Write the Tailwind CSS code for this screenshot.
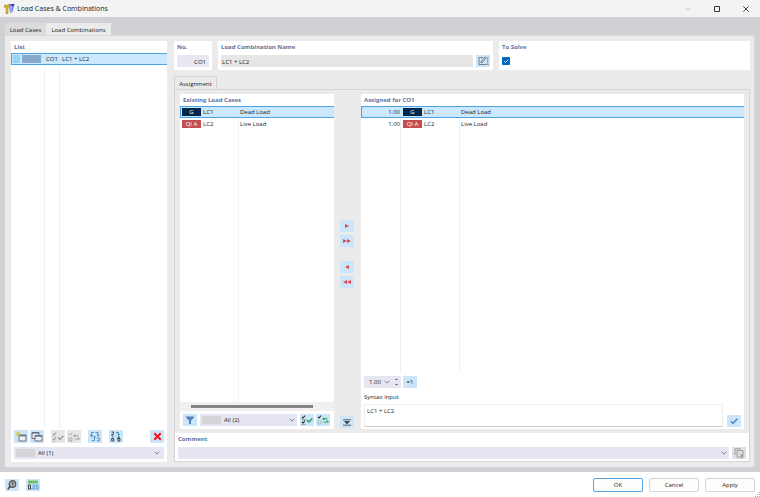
<!DOCTYPE html>
<html lang="en">
<head>
<meta charset="utf-8">
<title>Load Cases &amp; Combinations</title>
<script src="https://cdn.jsdelivr.net/npm/@tailwindcss/browser@4"></script>
</head>
<body class="flex h-screen flex-col overflow-hidden bg-white font-['Open_Sans','Noto_Sans',sans-serif] text-[6px] leading-[8px] text-[#222]">

<svg class="hidden">
  <symbol id="chev" viewBox="0 0 6 4"><path d="M.6.7 3 3.1 5.4.7" fill="none" stroke="#777" stroke-width=".9"/></symbol>
  <symbol id="checks" viewBox="0 0 12 10"><path d="M1 1.800 2 3 4 .7M1 6.800 2 8 4 5.700" fill="none" stroke="currentColor" stroke-width="1.100"/><path d="M.5 4.500h4M.5 9.300h4" stroke="currentColor" stroke-width=".4"/></symbol>
</svg>

<header class="flex h-[17px] shrink-0 items-center bg-[#f3f3f3] pl-1">
  <svg class="h-[11px] w-[11px]" viewBox="0 0 11 11"><path d="M4.500 1h6L8.500 9H6z" fill="#6f78e0"/><path d="M7.500 1h3L8 6z" fill="#3338a8"/><path d="M5 3h4L7.500 10H6z" fill="#9aa5ee"/><path d="M0 2h5.500v2.300H4V11H2V4.300H0z" fill="#e0b528" stroke="#8b7224" stroke-width=".4"/></svg>
  <h1 class="ml-[2px] text-[7px]">Load Cases &amp; Combinations</h1>
  <div class="ml-auto flex">
    <button aria-label="Minimize" class="grid h-4 w-[29px] place-items-center"><svg class="h-2 w-2" viewBox="0 0 8 8"><path d="M1 4h6" stroke="#ccc"/></svg></button>
    <button aria-label="Maximize" class="grid h-4 w-[29px] place-items-center"><svg class="h-2 w-2" viewBox="0 0 8 8"><path d="M1.500 1.500h5v5h-5z" fill="none" stroke="#333"/></svg></button>
    <button aria-label="Close" class="grid h-4 w-[29px] place-items-center"><svg class="h-2 w-2" viewBox="0 0 8 8"><path d="m1.300 1.300 5.400 5.400M6.700 1.300 1.300 6.700" stroke="#333" stroke-width=".9"/></svg></button>
  </div>
</header>

<main class="flex min-h-0 flex-1 flex-col bg-[#d0d0d5] px-[5px] pt-[6px] pb-[5px]">
  <nav class="flex h-3 shrink-0" role="tablist">
    <button role="tab" aria-selected="false" class="w-[41px] bg-[#dcdcdd] pt-[2px] text-center">Load Cases</button>
    <button role="tab" aria-selected="true" class="w-[65px] bg-[#ebebeb] pt-[2px] text-center">Load Combinations</button>
  </nav>

  <div class="flex min-h-0 flex-1 gap-[7px] border-t border-r border-[#dadada] bg-[#ebebeb] py-[5px] pr-[4px] pl-[6px]">
    <section class="flex w-[156px] shrink-0 flex-col bg-white">
      <h2 class="h-3 pt-[2px] pl-[3px] font-bold text-[#6472a0]">List</h2>
      <div class="min-h-0 flex-1">
        <table class="h-full w-full table-fixed border-separate border-spacing-0">
          <colgroup><col class="w-[34px]"><col class="w-[15px]"><col></colgroup>
          <tr class="h-3">
            <td class="h-3 border-y border-l border-[#4ba3e3] bg-[#cce8ff] p-0"><span class="flex gap-[2px] pl-[1px]"><i class="h-2 w-[7px] bg-[#8ed8f6]"></i><i class="h-2 w-[19px] bg-[#87a9c9]"></i></span></td>
            <td class="border-y border-[#4ba3e3] bg-[#cce8ff] p-0 pl-[1px]">CO1</td>
            <td class="border-y border-[#4ba3e3] bg-[#cce8ff] p-0 pl-[2px]">LC1 + LC2</td>
          </tr>
          <tr><td class="border-r border-[#f1f1f1]"></td><td class="border-r border-[#f1f1f1]"></td><td></td></tr>
        </table>
      </div>
      <div class="flex shrink-0 px-[3px] pt-[2px]">
        <button aria-label="New combination" class="grid h-[13px] w-[14px] place-items-center bg-[#cce5f8]"><svg class="h-[11px] w-3" viewBox="0 0 12 11"><path d="M4 4h7v6H4z" fill="#eee" stroke="#555" stroke-width=".8"/><path d="M4 4.700h7" stroke="#536d9a" stroke-width="1.200"/><path d="M3 0v5.500M.3 2.700h5.400M1 .8l4 4M5 .8l-4 4" stroke="#d9c81c" stroke-width=".7"/></svg></button>
        <button aria-label="Copy combination" class="ml-[2px] grid h-[13px] w-[14px] place-items-center bg-[#cce5f8]"><svg class="h-[11px] w-3" viewBox="0 0 12 11"><path d="M1 1.500h7v6H1z" fill="#eee" stroke="#555" stroke-width=".8"/><path d="M1 2h7" stroke="#536d9a" stroke-width="1.200"/><path d="M4 4.500h7v5.500H4z" fill="#eee" stroke="#555" stroke-width=".8"/><path d="M4 5h7" stroke="#536d9a" stroke-width="1.200"/></svg></button>
        <button aria-label="Select all" disabled class="ml-[7px] grid h-[13px] w-[14px] place-items-center bg-[#e6e6e6] text-[#999]"><svg class="h-[10px] w-3" viewBox="0 0 12 10"><use href="#checks"/><path d="m6 5.500 1.800 2L11.300 4" fill="none" stroke="#999" stroke-width="1.300"/></svg></button>
        <button aria-label="Invert selection" disabled class="ml-[2px] grid h-[13px] w-[14px] place-items-center bg-[#e6e6e6] text-[#999]"><svg class="h-[10px] w-3" viewBox="0 0 12 10"><path d="M1 1.800 2 3 4 .7M1 6h3v3H1zM6 4Q8 2.500 10.500 4M6.500 7Q9 8.500 11 6M6 2.500v2h2M11 8V6H9" fill="none" stroke="#999" stroke-width=".8"/></svg></button>
        <button aria-label="Renumber" class="ml-[7px] grid h-[13px] w-[14px] place-items-center bg-[#cce5f8]"><svg class="h-[11px] w-3" viewBox="0 0 12 11"><path d="M5 1.500H2.500v4M1 4l1.500 1.700L4 4M3 9.500h2.500V5.500M4.200 6.500l1.300-1.500 1.300 1.500M6.500 1.500H9v3.500M7.700 3.700 9 5l1.300-1.300M8 7h2.300v2.800H8" fill="none" stroke="#4289b5" stroke-width=".9"/></svg></button>
        <button aria-label="Sort by number" class="ml-[7px] grid h-[13px] w-[14px] place-items-center bg-[#cce5f8]"><svg class="h-[11px] w-3" viewBox="0 0 12 11"><path d="M1.500 1h2v1.500L1.500 4h2.200M1.700 7.500h2v2.500h-2zM8 7.500h2v2.500H8zM10 6H8v2" fill="none" stroke="#333" stroke-width=".9"/><path d="M2.700 5v1.800M6 1.500h2.500v2.700M7.300 3.300l1.200 1.200 1.200-1.200" fill="none" stroke="#288ac4" stroke-width=".9"/></svg></button>
        <button aria-label="Delete" class="ml-auto grid h-[13px] w-[14px] place-items-center bg-[#cce5f8]"><svg class="h-[9px] w-[9px]" viewBox="0 0 9 9"><path d="m1.300 1.300 6.400 6.400m0-6.400L1.300 7.700" stroke="#f5121c" stroke-width="2"/></svg></button>
      </div>
      <div class="relative mx-[3px] mt-[4px] mb-[3px] h-[12px] shrink-0">
        <select aria-label="List filter" class="block h-full w-full appearance-none bg-[#e6e6f2] pl-6"><option>All (1)</option></select>
        <i class="pointer-events-none absolute top-[2px] left-[2px] h-2 w-[19px] bg-[#d6d6d9]"></i>
        <svg class="pointer-events-none absolute top-1 right-1 h-1 w-[6px]"><use href="#chev"/></svg>
      </div>
    </section>

    <div class="flex min-w-0 flex-1 flex-col">
      <div class="flex h-[29px] shrink-0 gap-[6px]">
        <div class="w-[38px] bg-white px-[3px] pt-[2px]">
          <label for="no" class="block h-3 font-bold text-[#6472a0]">No.</label>
          <input id="no" value="CO1" class="block h-3 w-full bg-[#e8e8f3] pt-[1px] pr-[3px] text-right">
        </div>
        <div class="w-[275px] bg-white px-[3px] pt-[2px]">
          <label for="name" class="block h-3 font-bold text-[#6472a0]">Load Combination Name</label>
          <div class="flex gap-[3px]">
            <input id="name" value="LC1 + LC2" class="block h-3 min-w-0 flex-1 bg-[#e6e6e6] pt-[1px] pl-[1px]">
            <button aria-label="Edit name" class="grid h-3 w-[14px] place-items-center bg-[#cce5f8]"><svg class="h-[10px] w-[11px]" viewBox="0 0 11 10"><path d="M5 1.500H1v7h7.500M3 7l1-2.500L7 .8l1 1-3 4z" fill="none" stroke="#666" stroke-width=".8"/><path d="M8.500 1.500H11M9.700 1.500v7M8.500 8.500H11" stroke="#777" stroke-width=".6"/></svg></button>
          </div>
        </div>
        <div class="flex-1 bg-white px-[3px] pt-[2px]">
          <label for="solve" class="block h-3 font-bold text-[#6472a0]">To Solve</label>
          <span class="relative mt-[2px] block h-2 w-2">
            <input id="solve" type="checkbox" checked class="block h-2 w-2 appearance-none rounded-[1px] bg-[#0067c0]">
            <svg class="pointer-events-none absolute inset-0 h-2 w-2" viewBox="0 0 8 8"><path d="m2 4 1.500 1.500L6.200 2.800" fill="none" stroke="#fff" stroke-width=".8"/></svg>
          </span>
        </div>
      </div>

      <button role="tab" aria-selected="true" class="mt-[6px] h-[13px] w-[43px] shrink-0 border-x border-t border-[#d2d2d6] pt-[1px]">Assignment</button>
      <div class="flex min-h-0 flex-1 flex-col border border-[#d5d5d9]">
        <div class="flex min-h-0 flex-1 px-[5px] pt-[4px]">
          <section class="flex w-[154px] shrink-0 flex-col bg-white">
            <h2 class="h-3 shrink-0 pt-[2px] pl-[3px] font-bold text-[#6472a0]">Existing Load Cases</h2>
            <div class="min-h-0 flex-1">
              <table class="h-full w-full table-fixed border-separate border-spacing-0">
                <colgroup><col class="w-[21px]"><col class="w-[38px]"><col></colgroup>
                <tr class="h-3">
                  <td class="h-3 border-y border-l border-[#4ba3e3] bg-[#cce8ff] p-0"><span class="ml-[1px] block h-2 w-[19px] bg-[#00274c] text-center text-white">G</span></td>
                  <td class="border-y border-[#4ba3e3] bg-[#cce8ff] p-0 pl-[2px]">LC1</td>
                  <td class="border-y border-[#4ba3e3] bg-[#cce8ff] p-0 pl-[1px]">Dead Load</td>
                </tr>
                <tr class="h-3">
                  <td class="h-3 p-0"><span class="ml-[2px] block h-2 w-[19px] bg-[#c44d50] text-center text-white">QI A</span></td>
                  <td class="border-r border-[#f1f1f1] p-0 pl-[2px]">LC2</td>
                  <td class="p-0 pl-[1px]">Live Load</td>
                </tr>
                <tr><td></td><td class="border-r border-[#f1f1f1]"></td><td></td></tr>
              </table>
            </div>
            <div class="h-[9px] shrink-0 bg-[#f0f0f0] pt-[3px] pl-[11px]"><div class="h-[3px] w-[122px] bg-[#858585]"></div></div>
            <div class="flex shrink-0 py-[3px] pr-[4px] pl-[3px]">
              <button aria-label="Filter" class="grid h-3 w-[14px] place-items-center bg-[#cce5f8]"><svg class="h-2 w-2" viewBox="0 0 8 8"><path d="M0 .5h8v1L5 4.500V8H3V4.500L0 1.500z" fill="#5582b8"/></svg></button>
              <div class="relative mx-[3px] h-3 flex-1">
                <select aria-label="Case filter" class="block h-full w-full appearance-none bg-[#e6e6f2] pl-6"><option>All (2)</option></select>
                <i class="pointer-events-none absolute top-[2px] left-[2px] h-2 w-[19px] bg-[#d6d6d9]"></i>
                <svg class="pointer-events-none absolute top-1 right-[2px] h-1 w-[6px]"><use href="#chev"/></svg>
              </div>
              <button aria-label="Select all cases" class="grid h-3 w-[14px] place-items-center bg-[#cce5f8] text-[#222]"><svg class="h-[10px] w-3" viewBox="0 0 12 10"><use href="#checks"/><path d="m6 5 1.800 2L11.300 3.500" fill="none" stroke="#22a354" stroke-width="1.400"/></svg></button>
              <button aria-label="Invert case selection" class="ml-[2px] grid h-3 w-[14px] place-items-center bg-[#cce5f8]"><svg class="h-[10px] w-3" viewBox="0 0 12 10"><path d="M1 1.800 2 3 4 .7" fill="none" stroke="#222" stroke-width="1.100"/><path d="M1 6h3v3H1z" fill="none" stroke="#8aa" stroke-width=".6"/><path d="M6 4Q8 2.500 10.500 4M6.500 7Q9 8.500 11 6M6 2.500v2h2M11 8V6H9" fill="none" stroke="#22a354" stroke-width=".9"/></svg></button>
            </div>
          </section>

          <div class="flex w-[27px] shrink-0 flex-col items-start pt-[126px] pl-[6px]">
            <button aria-label="Add" class="grid h-3 w-[14px] place-items-center bg-[#cce5f8]"><svg class="h-1 w-1" viewBox="0 0 4 4"><path d="M0 0l4 2-4 2z" fill="#e04950"/></svg></button>
            <button aria-label="Add all" class="mt-[3px] grid h-3 w-[14px] place-items-center bg-[#cce5f8]"><svg class="h-1 w-2" viewBox="0 0 8 4"><path d="M0 0l4 2-4 2zM4 0l4 2-4 2z" fill="#e04950"/></svg></button>
            <button aria-label="Remove" class="mt-[14px] grid h-3 w-[14px] place-items-center bg-[#cce5f8]"><svg class="h-1 w-1" viewBox="0 0 4 4"><path d="M4 0L0 2l4 2z" fill="#e04950"/></svg></button>
            <button aria-label="Remove all" class="mt-[3px] grid h-3 w-[14px] place-items-center bg-[#cce5f8]"><svg class="h-1 w-2" viewBox="0 0 8 4"><path d="M4 0L0 2l4 2zM8 0L4 2l4 2z" fill="#e04950"/></svg></button>
            <button aria-label="Collapse" class="mt-auto mb-[1px] grid h-3 w-[14px] place-items-center bg-[#cce5f8]"><svg class="h-[7px] w-2" viewBox="0 0 8 7"><path d="M0 .8h8M0 6.200h8" stroke="#555" stroke-width=".9"/><path d="M1 2h6L4 5.500z" fill="#444"/></svg></button>
          </div>

          <section class="flex min-w-0 flex-1 flex-col bg-white">
            <h2 class="h-3 shrink-0 pt-[2px] pl-[3px] font-bold text-[#6472a0]">Assigned for CO1</h2>
            <div class="min-h-0 flex-1">
              <table class="h-full w-full table-fixed border-separate border-spacing-0">
                <colgroup><col class="w-[40px]"><col class="w-[22px]"><col class="w-[37px]"><col></colgroup>
                <tr class="h-3">
                  <td class="h-3 border-y border-l border-[#4ba3e3] bg-[#cce8ff] p-0 pr-[1px] text-right">1.00</td>
                  <td class="border-y border-[#4ba3e3] bg-[#cce8ff] p-0"><span class="ml-[2px] block h-2 w-[19px] bg-[#00274c] text-center text-white">G</span></td>
                  <td class="border-y border-[#4ba3e3] bg-[#cce8ff] p-0 pl-[1px]">LC1</td>
                  <td class="border-y border-[#4ba3e3] bg-[#cce8ff] p-0 pl-[1px]">Dead Load</td>
                </tr>
                <tr class="h-3">
                  <td class="h-3 border-r border-[#f1f1f1] p-0 text-right">1.00</td>
                  <td class="p-0"><span class="ml-[2px] block h-2 w-[19px] bg-[#c44d50] text-center text-white">QI A</span></td>
                  <td class="border-r border-[#f1f1f1] p-0 pl-[1px]">LC2</td>
                  <td class="p-0 pl-[1px]">Live Load</td>
                </tr>
                <tr><td class="border-r border-[#f1f1f1]"></td><td></td><td class="border-r border-[#f1f1f1]"></td><td></td></tr>
              </table>
            </div>
            <div class="mt-[3px] flex shrink-0 gap-[2px] pl-[3px]">
              <div class="flex h-3 w-[37px] items-center bg-[#e6e6f2] pr-[3px]">
                <input aria-label="Factor" value="1.00" class="h-3 min-w-0 flex-1 pl-[5px]">
                <svg class="h-1 w-[6px]"><use href="#chev"/></svg>
                <svg class="ml-[5px] h-2 w-[3px]" viewBox="0 0 3 8"><path d="M0 2 1.500.5 3 2zM0 6l1.500 1.500L3 6z" fill="#555"/></svg>
              </div>
              <button class="h-3 w-[14px] bg-[#cce5f8]">=1</button>
            </div>
            <label for="syntax" class="mt-[5px] h-[11px] shrink-0 pl-[3px]">Syntax input</label>
            <div class="flex shrink-0 items-end gap-1 px-[3px] pb-[2px]">
              <textarea id="syntax" class="block h-[23px] min-w-0 flex-1 resize-none border border-[#eee] border-b-[#ccc] px-[2px] pt-[2px]">LC1 + LC2</textarea>
              <button aria-label="Apply syntax" class="grid h-3 w-[14px] place-items-center bg-[#cce5f8]"><svg class="h-2 w-2" viewBox="0 0 8 8"><path d="m.8 4.200 2.200 2L7.300 1.700" fill="none" stroke="#4a86bb" stroke-width="1.500"/></svg></button>
            </div>
          </section>
        </div>
        <div class="mt-1 h-7 shrink-0 bg-white px-[3px] pt-[2px]">
          <label for="comment" class="block h-3 font-bold text-[#6472a0]">Comment</label>
          <div class="flex gap-[3px]">
            <div class="relative h-3 flex-1">
              <select id="comment" class="block h-full w-full appearance-none bg-[#e6e6f2]"><option></option></select>
              <svg class="pointer-events-none absolute top-1 right-[2px] h-1 w-[6px]"><use href="#chev"/></svg>
            </div>
            <button aria-label="Comment library" disabled class="grid h-3 w-[14px] place-items-center bg-[#e0e0e0]"><svg class="h-[10px] w-[10px]" viewBox="0 0 10 10"><path d="M1 7V.8h6" fill="none" stroke="#999" stroke-width=".9"/><path d="M3 2.500h6v6.700H3z" fill="#ddd" stroke="#999" stroke-width=".9"/><path d="M6.500 6.500h2.300v2.300H6.500z" fill="#999"/></svg></button>
          </div>
        </div>
      </div>
    </div>
  </div>
</main>

<footer class="relative flex h-[25px] shrink-0 items-center gap-[6px] bg-white px-[5px]">
  <button aria-label="Help" class="grid h-3 w-[14px] place-items-center bg-[#cce5f8]"><svg class="h-[10px] w-[10px]" viewBox="0 0 10 10"><circle cx="5.500" cy="4" r="3.300" fill="#aaa" stroke="#555" stroke-width="1.200"/><path d="m3.300 6.300-2.500 3" stroke="#444" stroke-width="1.500"/><path d="M4.500 3.200Q5.500 2 6.500 3.200L5.500 4.500v.6" fill="none" stroke="#333" stroke-width=".8"/></svg></button>
  <button aria-label="Units" class="ml-[1px] grid h-3 w-[14px] place-items-center bg-[#cce5f8]"><svg class="h-[10px] w-3" viewBox="0 0 12 10"><path d="M1 .5h10v3H1z" fill="#76c56a"/><path d="M2.500 1v1.500M4.500 1v1.500M6.500 1v1.500M8.500 1v1.500" stroke="#4b9c45" stroke-width=".5"/><path d="M1.500 5h2v4h-2z" fill="none" stroke="#333" stroke-width=".9"/><path d="M6 5h1.800v4H6zM9.300 5h1.800v4H9.300z" fill="none" stroke="#4c95d6" stroke-width=".8"/><path d="M4.500 8.500h.8v.8h-.8z" fill="#333"/></svg></button>
  <button class="ml-auto h-[14px] w-[50px] rounded-[2px] border border-[#5aa5e4] bg-[#fdfdfd] pt-[1px]">OK</button>
  <button class="h-[14px] w-[50px] rounded-[2px] border border-[#d5d5d5] bg-[#fdfdfd] pt-[1px]">Cancel</button>
  <button class="h-[14px] w-[50px] rounded-[2px] border border-[#d5d5d5] bg-[#fdfdfd] pt-[1px]">Apply</button>
  <svg class="pointer-events-none absolute right-0 bottom-0 h-[5px] w-[5px]" viewBox="0 0 5 5"><path d="M4 0h1v1H4zM2 2h1v1H2zM4 2h1v1H4zM0 4h1v1H0zM2 4h1v1H2zM4 4h1v1H4z" fill="#aaa"/></svg>
</footer>
</body>
</html>
